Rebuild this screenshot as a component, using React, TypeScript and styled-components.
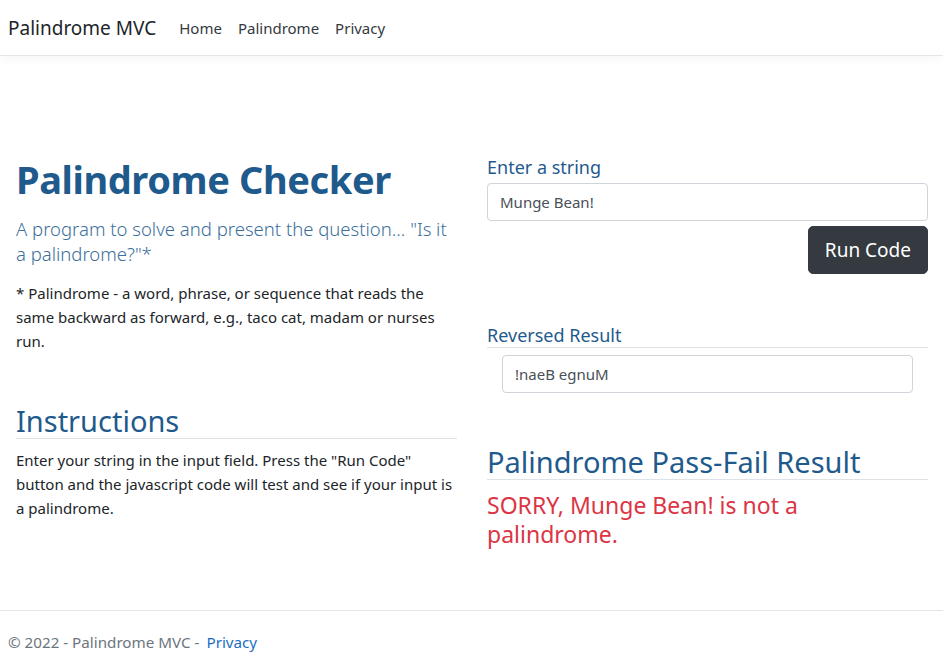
import React from "react";
import styled, { createGlobalStyle } from "styled-components";

const Global = createGlobalStyle`
  html, body { margin: 0; padding: 0; background: #fff; }
  body {
    font-family: "Noto Sans", "Open Sans", sans-serif;
    font-size: 15px;
    line-height: 24px;
    color: #212529;
  }
  * { box-sizing: border-box; }
`;

const Page = styled.div`
  min-height: 669px;
  display: flex;
  flex-direction: column;
`;

const NavBar = styled.header`
  height: 56px;
  display: flex;
  align-items: center;
  padding: 0 8px;
  border-bottom: 1px solid #e5e5e5;
  box-shadow: 0 4px 10px rgba(0, 0, 0, 0.03);
`;

const Brand = styled.a`
  font-size: 19px;
  color: #212529;
  text-decoration: none;
  margin-right: 15px;
  line-height: 28px;
`;

const NavList = styled.nav`
  display: flex;
`;

const NavLink = styled.a`
  font-size: 15px;
  color: #343a40;
  text-decoration: none;
  padding: 0 8px;
`;

const Main = styled.main`
  flex: 1;
  display: grid;
  grid-template-columns: 1fr 1fr;
  column-gap: 30px;
  padding: 97px 15px 0 16px;
`;

const Column = styled.section`
  display: flex;
  flex-direction: column;
`;

const Title = styled.h1`
  margin: 0;
  font-size: 38px;
  line-height: 52px;
  font-weight: 700;
  letter-spacing: -0.4px;
  color: #1f5a8c;
`;

const Lead = styled.p`
  margin: 12px 0 0;
  font-size: 18.5px;
  line-height: 24.5px;
  font-weight: 300;
  color: #3c6f9b;
`;

const Text = styled.p<{ $top?: number }>`
  margin: 0;
  padding-top: ${(p) => p.$top ?? 0}px;
  font-size: 15px;
  line-height: 24px;
`;

const SectionHeading = styled.h2<{ $top: number }>`
  margin: ${(p) => p.$top}px 0 0;
  font-size: 29px;
  line-height: 34px;
  font-weight: 400;
  color: #1f5a8c;
  border-bottom: 1px solid #dee2e6;
`;

const Label = styled.label<{ $top?: number; $ruled?: boolean }>`
  display: block;
  margin-top: ${(p) => p.$top ?? 0}px;
  font-size: 18px;
  line-height: 24px;
  color: #1f5a8c;
  border-bottom: ${(p) => (p.$ruled ? "1px solid #dee2e6" : "none")};
`;

const Input = styled.input<{ $inset?: boolean }>`
  display: block;
  width: ${(p) => (p.$inset ? "calc(100% - 30px)" : "100%")};
  margin: ${(p) => (p.$inset ? "7px 15px 0" : "4px 0 0")};
  height: 38px;
  padding: 6px 12px;
  font-family: inherit;
  font-size: 15px;
  color: #495057;
  background: #fff;
  border: 1px solid #ced4da;
  border-radius: 4px;
  outline: none;
`;

const ButtonRow = styled.div`
  display: flex;
  justify-content: flex-end;
  margin-top: 5px;
`;

const RunButton = styled.button`
  height: 48px;
  padding: 0 16px;
  font-family: inherit;
  font-size: 19px;
  color: #fff;
  background: #343a40;
  border: 1px solid #343a40;
  border-radius: 5px;
  cursor: pointer;
`;

const Fail = styled.p`
  margin: 11px 0 0;
  font-size: 23px;
  line-height: 29px;
  color: #dc3545;
  max-width: 330px;
`;

const Footer = styled.footer`
  border-top: 1px solid #e5e5e5;
  height: 59px;
  display: flex;
  align-items: center;
  padding: 3px 8px 0;
  font-size: 15.2px;
  color: #6c757d;
`;

const FooterLink = styled.a`
  color: #1b6ec2;
  text-decoration: none;
  margin-left: 7px;
`;

export default function App() {
  return (
    <Page>
      <Global />
      <NavBar>
        <Brand href="#">Palindrome MVC</Brand>
        <NavList>
          <NavLink href="#">Home</NavLink>
          <NavLink href="#">Palindrome</NavLink>
          <NavLink href="#">Privacy</NavLink>
        </NavList>
      </NavBar>
      <Main>
        <Column>
          <Title>Palindrome Checker</Title>
          <Lead>A program to solve and present the question... "Is it a palindrome?"*</Lead>
          <Text $top={15}>
            * Palindrome - a word, phrase, or sequence that reads the same backward as forward,
            e.g., taco cat, madam or nurses run.
          </Text>
          <SectionHeading $top={51}>Instructions</SectionHeading>
          <Text $top={9}>
            Enter your string in the input field. Press the "Run Code" button and the javascript
            code will test and see if your input is a palindrome.
          </Text>
        </Column>
        <Column>
          <Label $top={2}>Enter a string</Label>
          <Input defaultValue="Munge Bean!" />
          <ButtonRow>
            <RunButton>Run Code</RunButton>
          </ButtonRow>
          <Label $top={49} $ruled>Reversed Result</Label>
          <Input $inset defaultValue="!naeB egnuM" readOnly />
          <SectionHeading $top={52}>Palindrome Pass-Fail Result</SectionHeading>
          <Fail>SORRY, Munge Bean! is not a palindrome.</Fail>
        </Column>
      </Main>
      <Footer>
        © 2022 - Palindrome MVC -<FooterLink href="#">Privacy</FooterLink>
      </Footer>
    </Page>
  );
}
